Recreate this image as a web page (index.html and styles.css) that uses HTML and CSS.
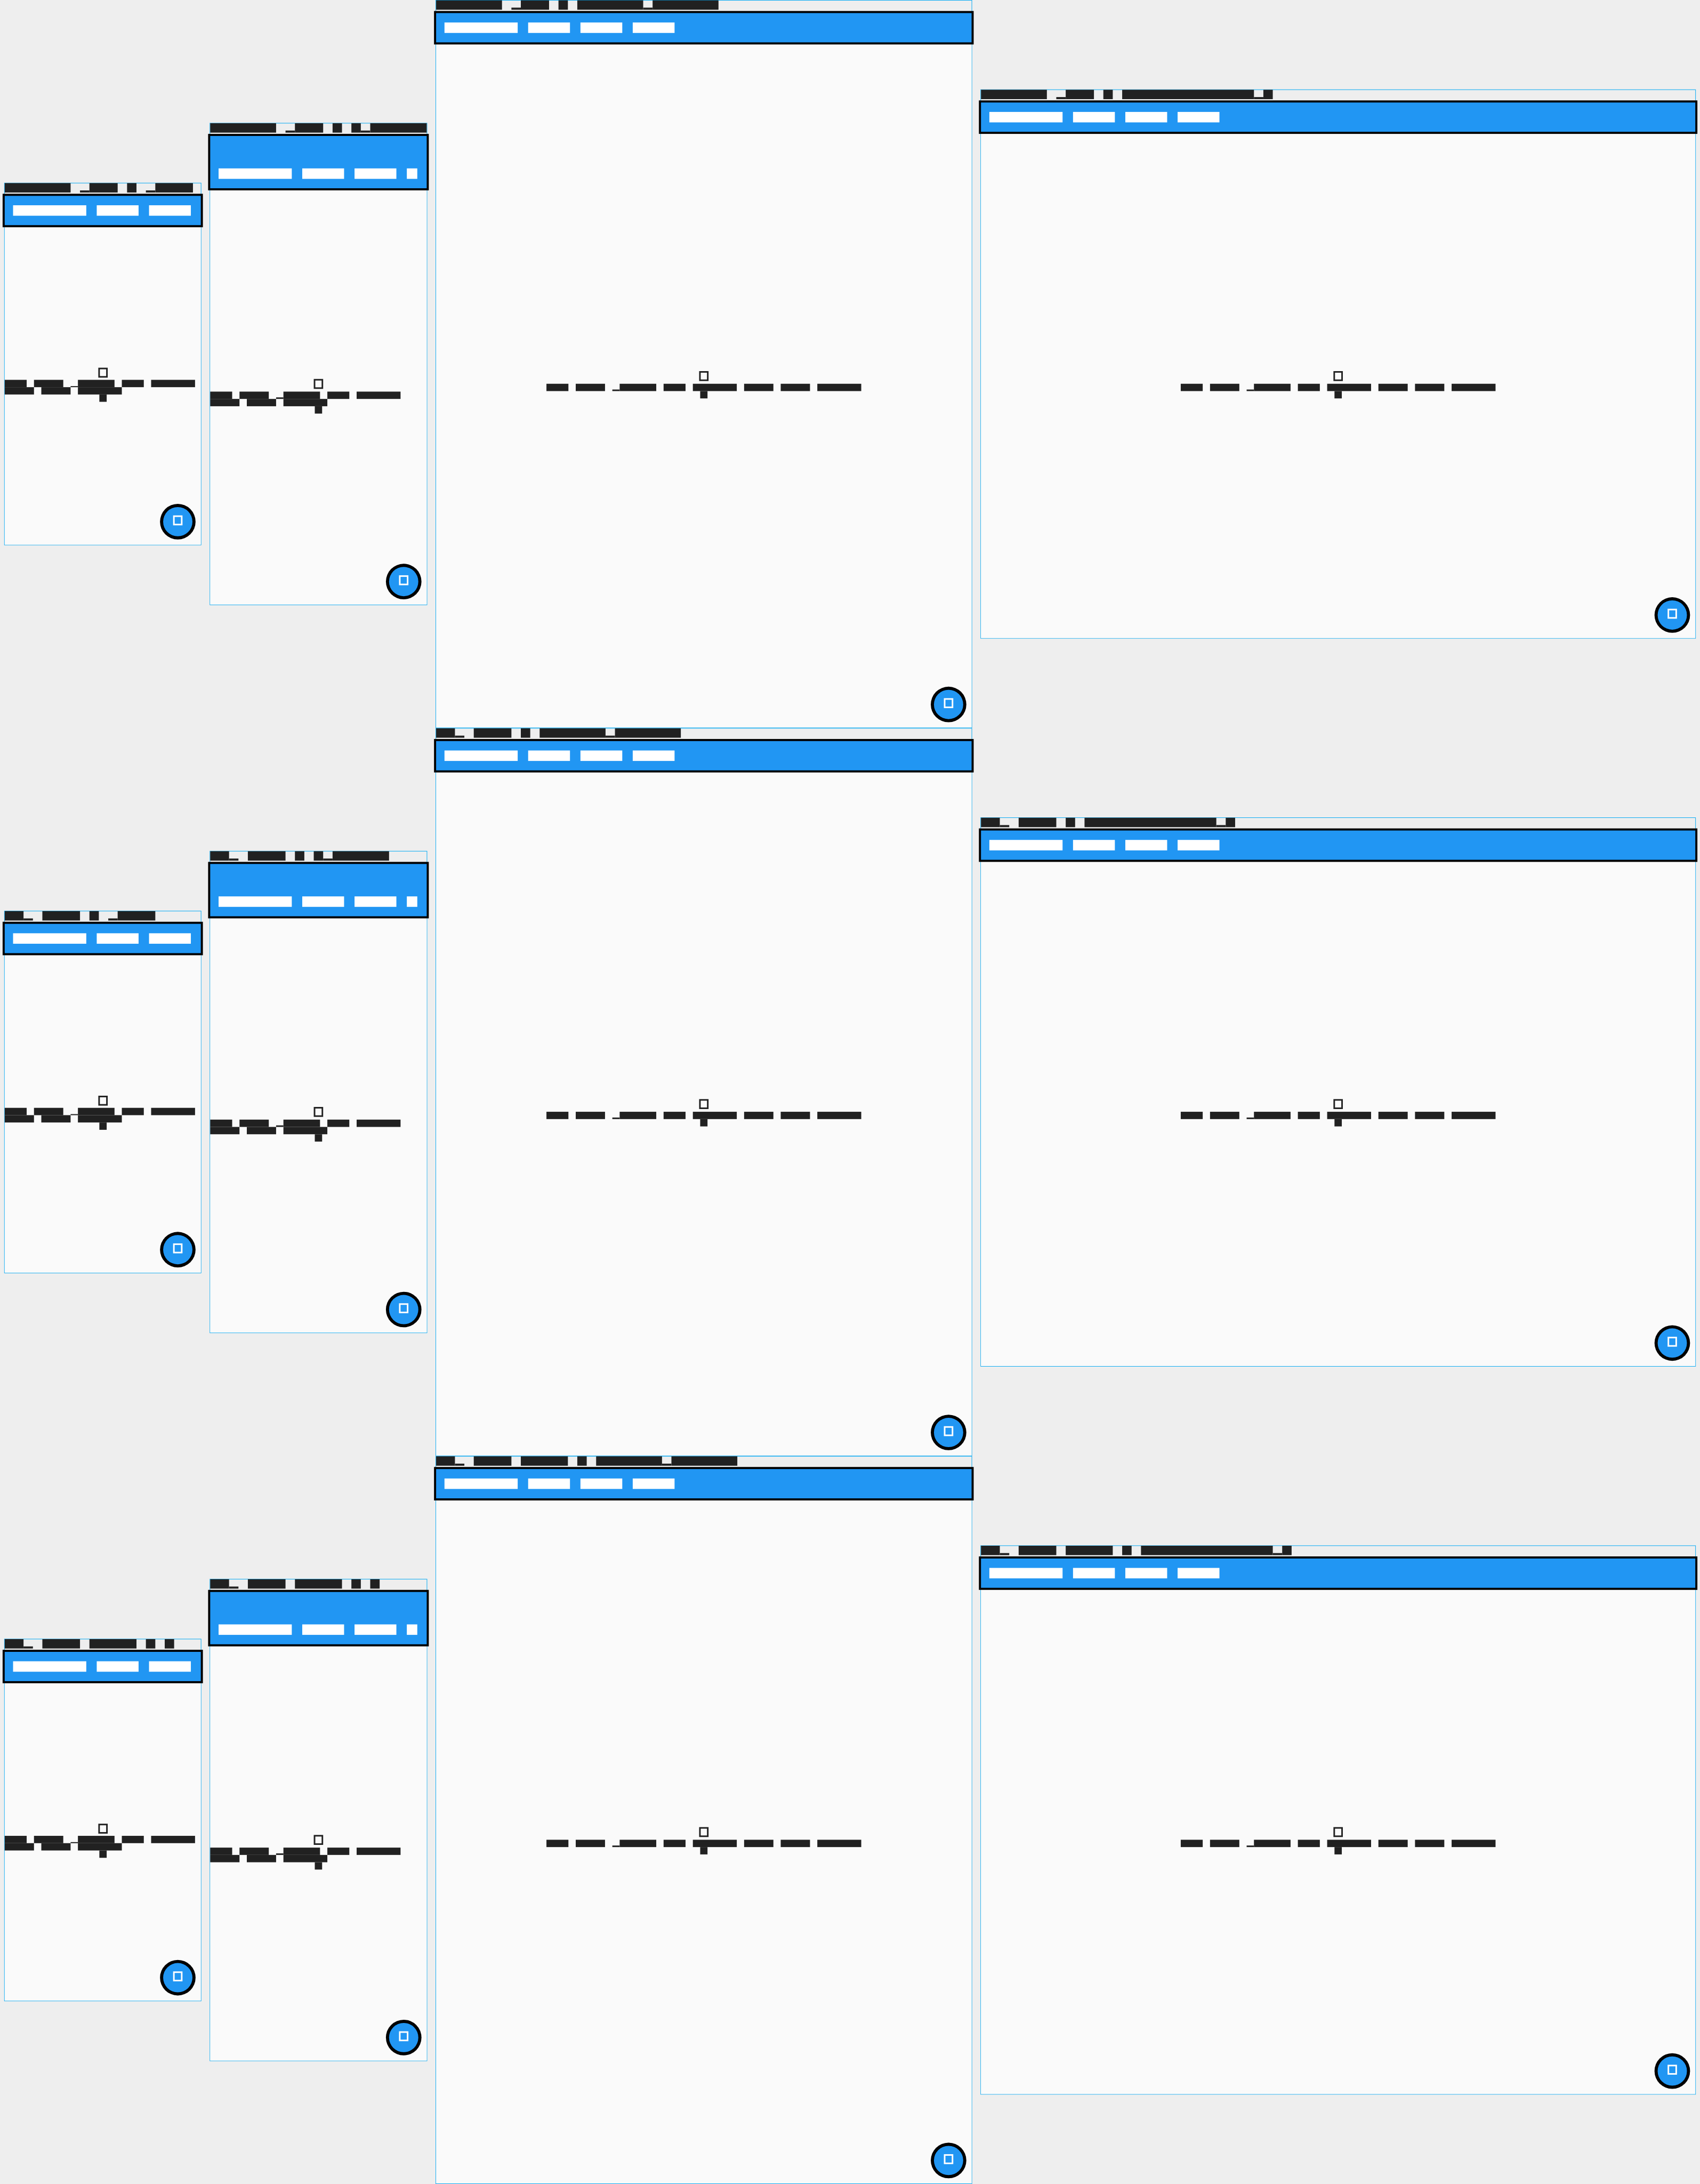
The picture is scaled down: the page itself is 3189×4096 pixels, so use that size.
FILE: index.html
```html
<!DOCTYPE html>
<html lang="en">
<head>
<meta charset="utf-8">
<title>Device scenarios</title>
<link rel="stylesheet" href="styles.css">
</head>
<body>
<main class="board" id="board"></main>
<script src="board.js"></script>
</body>
</html>
```
FILE: styles.css
```css
html,
body {
  margin: 0;
  width: 3189px;
  height: 4096px;
  overflow: hidden;
  background: #eeeeee;
}

.board {
  width: 3251px;
  transform: scale(0.98093, 0.98084);
  transform-origin: 0 0;
}

.scenario {
  display: flex;
  align-items: center;
  height: 1392px;
}

.cell {
  margin: 0 8px;
  border: 1px solid #03a9f4;
  flex: none;
}

.phone { --w: 375px; --h: 667px; --bar: 56px; }
.iphone11 { --w: 414px; --h: 896px; --bar: 100px; }
.portrait { --w: 1024px; --h: 1366px; --bar: 56px; }
.landscape { --w: 1366px; --h: 1024px; --bar: 56px; }

/* The phone is an odd number of pixels high, so it centres on a half pixel. */
.phone {
  position: relative;
  margin-top: 1px;
  transform: translateY(-0.5px);
}

.label {
  width: var(--w);
  height: 24px;
  overflow: visible;
}

.label .line {
  font-size: 18px;
  color: #212121;
  transform: translateY(-0.4px);
}

.screen {
  display: flex;
  flex-direction: column;
  position: relative;
  width: var(--w);
  height: var(--h);
  background: #fafafa;
}

.appbar {
  box-sizing: border-box;
  display: flex;
  flex: none;
  align-items: flex-end;
  height: var(--bar);
  padding: 0 16px 18px;
  background: #2196f3;
  box-shadow: 0 0 0 4px #000000;
}

.appbar .line {
  font-size: 20px;
  color: #ffffff;
}

.body {
  flex: 1;
  display: flex;
  flex-direction: column;
  align-items: center;
  justify-content: center;
}

.body .line {
  font-size: 14px;
  color: #212121;
  transform: translateY(-0.2px);
}

.body .para {
  display: flex;
  flex-direction: column;
}

.phone .para,
.iphone11 .para {
  width: 100%;
}

.icon {
  box-sizing: border-box;
  width: 18px;
  height: 19.4px;
  border: 3px solid currentColor;
}

.body .icon {
  margin-bottom: 4.6px;
  color: #212121;
  transform: translateY(-0.4px);
}

.fab {
  position: absolute;
  right: 16px;
  bottom: 16px;
  width: 56px;
  height: 56px;
  border-radius: 50%;
  display: flex;
  align-items: center;
  justify-content: center;
  background: #2196f3;
  box-shadow: 0 0 0 6px #000000;
}

.fab .icon {
  color: #ffffff;
  margin-bottom: 5px;
}

.line {
  display: flex;
  align-items: flex-end;
  height: 1em;
}

.run {
  flex: none;
  width: calc(var(--n) * 1em);
  height: 1em;
}

.full {
  background: currentColor;
}

.low {
  height: 0.2em;
  background: currentColor;
}
```
FILE: board.js
```js
// '#' is a full block glyph, '_' a descender-only glyph, ' ' a gap.
const DEVICES = [
  { name: 'phone', title: '####### #### ####', para: ['### #### _##### ### ######', '#### #### ######'] },
  { name: 'iphone11', title: '####### #### #### #', para: ['### #### _##### ### ######', '#### #### ######'] },
  { name: 'portrait', title: '####### #### #### ####', para: ['### #### _##### ### ###### #### #### ######'] },
  { name: 'landscape', title: '####### #### #### ####', para: ['### #### _##### ### ###### #### #### ######'] }
];

const SCENARIOS = [
  ['####### _### # _####', '####### _### # #_######', '####### _### # #######_#######', '####### _### # ##############_#'],
  ['##_ #### # _####', '##_ #### # #_######', '##_ #### # #######_#######', '##_ #### # ##############_#'],
  ['##_ #### ##### # #', '##_ #### ##### # #', '##_ #### ##### # #######_#######', '##_ #### ##### # ##############_#']
];

const KIND = { '#': 'full', '_': 'low', ' ': 'gap' };

const line = (pattern) =>
  '<div class="line">' +
  pattern.match(/#+|_+| +/g)
    .map((run) => `<span class="run ${KIND[run[0]]}" style="--n:${run.length}"></span>`)
    .join('') +
  '</div>';

const cell = (device, label) => `
  <section class="cell ${device.name}">
    <div class="label">${line(label)}</div>
    <div class="screen">
      <header class="appbar">${line(device.title)}</header>
      <div class="body">
        <i class="icon"></i>
        <div class="para">${device.para.map(line).join('')}</div>
        ${line('#')}
      </div>
      <div class="fab"><i class="icon"></i></div>
    </div>
  </section>`;

document.getElementById('board').innerHTML = SCENARIOS
  .map((labels) => `<div class="scenario">${DEVICES.map((d, i) => cell(d, labels[i])).join('')}</div>`)
  .join('');
```
